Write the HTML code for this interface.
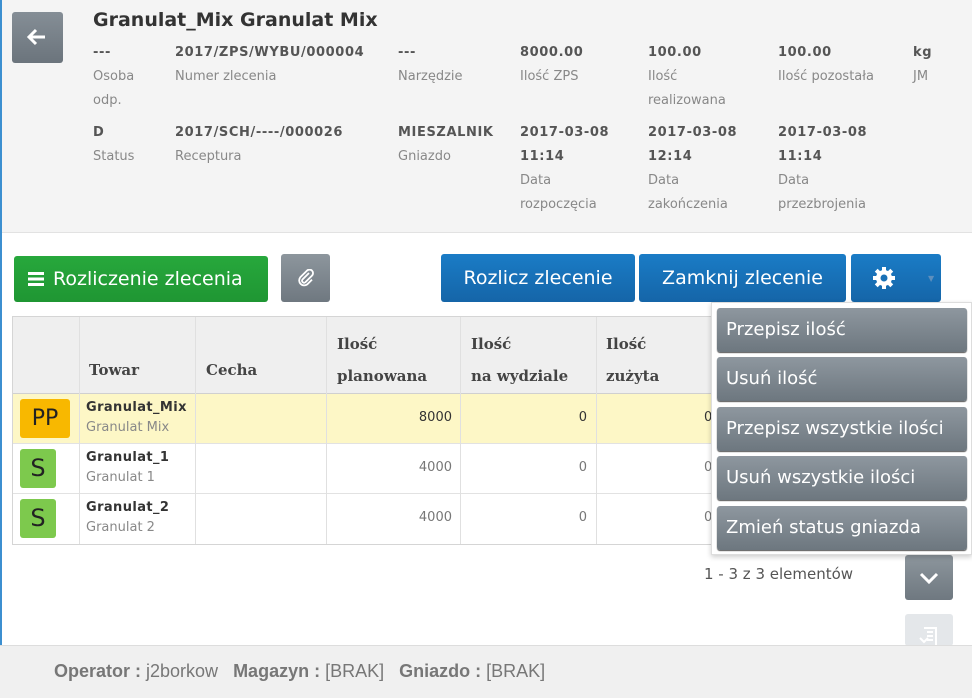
<!DOCTYPE html>
<html><head><meta charset="utf-8"><style>
*{margin:0;padding:0;box-sizing:border-box}
body{width:972px;height:698px;position:relative;overflow:hidden;background:#fff;font-family:"DejaVu Sans",Verdana,sans-serif;color:#555}
.a{position:absolute;white-space:nowrap}
.hdr{position:absolute;left:0;top:0;width:972px;height:233px;background:#f4f4f4;border-bottom:1px solid #e2e2e2}
.v{font-weight:bold;font-size:13px;letter-spacing:0.6px;color:#555}
.l{font-size:13px;color:#888}
.btn{position:absolute;color:#fff;font-size:18px;display:flex;align-items:center;justify-content:center;border-radius:3px}
.blue{background:linear-gradient(#1a7cc6,#1565a8)}
.gray{background:linear-gradient(#8d969d,#6f7880)}
.th{position:absolute;font-family:"DejaVu Serif",Georgia,serif;font-weight:bold;font-size:15px;color:#444}
.dd{position:absolute;left:717px;width:250px;height:44px;border-radius:3px;background:linear-gradient(#8e979f,#6d777f);color:#fff;font-size:18px;padding-left:9px;line-height:44px;box-shadow:0 1px 1px #555}
.nm{font-size:13px;font-weight:bold;color:#333;letter-spacing:0.4px}
</style></head><body>
<div class="hdr"></div>
<div class="a" style="left:0;top:0;width:2px;height:698px;background:#3c8fd0"></div>
<div class="a" style="left:12px;top:12px;width:51px;height:51px;border-radius:3px;background:linear-gradient(#858e96,#6b747c)"></div>
<svg class="a" style="left:25px;top:25px" width="24" height="24" viewBox="0 0 24 24"><path d="M20 12H5M11 5l-7 7 7 7" stroke="#fff" stroke-width="3" fill="none"/></svg>
<div class="a" style="left:93px;top:9px;font-size:19px;font-weight:bold;color:#333">Granulat_Mix Granulat Mix</div>

<div class="a v" style="left:93px;top:45px">---</div>
<div class="a l" style="left:93px;top:65px;line-height:24px">Osoba<br>odp.</div>
<div class="a v" style="left:175px;top:45px">2017/ZPS/WYBU/000004</div>
<div class="a l" style="left:175px;top:69px">Numer zlecenia</div>
<div class="a v" style="left:398px;top:45px">---</div>
<div class="a l" style="left:398px;top:69px">Narzędzie</div>
<div class="a v" style="left:520px;top:45px">8000.00</div>
<div class="a l" style="left:520px;top:69px">Ilość ZPS</div>
<div class="a v" style="left:648px;top:45px">100.00</div>
<div class="a l" style="left:648px;top:65px;line-height:24px">Ilość<br>realizowana</div>
<div class="a v" style="left:778px;top:45px">100.00</div>
<div class="a l" style="left:778px;top:69px">Ilość pozostała</div>
<div class="a v" style="left:913px;top:45px">kg</div>
<div class="a l" style="left:913px;top:69px">JM</div>

<div class="a v" style="left:93px;top:125px">D</div>
<div class="a l" style="left:93px;top:149px">Status</div>
<div class="a v" style="left:175px;top:125px">2017/SCH/----/000026</div>
<div class="a l" style="left:175px;top:149px">Receptura</div>
<div class="a v" style="left:398px;top:125px">MIESZALNIK</div>
<div class="a l" style="left:398px;top:149px">Gniazdo</div>
<div class="a" style="left:520px;top:121px;line-height:24px"><div class="v">2017-03-08<br>11:14</div><div class="l">Data<br>rozpoczęcia</div></div>
<div class="a" style="left:648px;top:121px;line-height:24px"><div class="v">2017-03-08<br>12:14</div><div class="l">Data<br>zakończenia</div></div>
<div class="a" style="left:778px;top:121px;line-height:24px"><div class="v">2017-03-08<br>11:14</div><div class="l">Data<br>przezbrojenia</div></div>

<div class="btn" style="left:14px;top:256px;width:254px;height:46px;background:linear-gradient(#27a83c,#1f9633);justify-content:flex-start;padding-left:14px;font-size:19px"><svg width="16" height="16" viewBox="0 0 16 16" style="margin-right:9px"><rect y="1" width="16" height="3" fill="#fff"/><rect y="6.5" width="16" height="3" fill="#fff"/><rect y="12" width="16" height="3" fill="#fff"/></svg>Rozliczenie zlecenia</div>
<div class="btn gray" style="left:281px;top:254px;width:49px;height:48px"><svg width="18" height="18" viewBox="0 0 18 18"><path d="M12 4L5.5 10.5a2 2 0 0 0 2.8 2.8L15 6.6a3.5 3.5 0 0 0-5-5L3.2 8.4a5 5 0 0 0 7 7L15 10.6" stroke="#fff" stroke-width="1.8" fill="none"/></svg></div>
<div class="btn blue" style="left:441px;top:254px;width:194px;height:48px;font-size:19px">Rozlicz zlecenie</div>
<div class="btn blue" style="left:639px;top:254px;width:207px;height:48px;font-size:19px">Zamknij zlecenie</div>
<div class="btn blue" style="left:851px;top:254px;width:90px;height:48px;justify-content:flex-start;padding-left:21px"><svg width="24" height="24" viewBox="0 0 24 24"><g fill="#fff"><circle cx="12" cy="12" r="8"/><rect x="10" y="1" width="4" height="22"/><rect x="1" y="10" width="22" height="4"/><rect x="10" y="1" width="4" height="22" transform="rotate(45 12 12)"/><rect x="10" y="1" width="4" height="22" transform="rotate(-45 12 12)"/></g><circle cx="12" cy="12" r="3.5" fill="#1870b6"/></svg><span style="margin-left:32px;font-size:8px;color:#5d8fbd">&#9660;</span></div>

<div class="a" style="left:12px;top:316px;width:700px;height:229px;border:1px solid #d5d5d5;overflow:hidden">
 <div class="a" style="left:0;top:0;width:700px;height:77px;background:#efefef;border-bottom:1px solid #d0d0d0"></div>
 <div class="a" style="left:0;top:77px;width:700px;height:50px;background:#fdf7c6;border-bottom:1px solid #e2e2e2"></div>
 <div class="a" style="left:0;top:127px;width:700px;height:50px;border-bottom:1px solid #e2e2e2"></div>
 <div class="a" style="left:66px;top:0;width:1px;height:229px;background:#e0e0e0"></div>
 <div class="a" style="left:182px;top:0;width:1px;height:229px;background:#e0e0e0"></div>
 <div class="a" style="left:313px;top:0;width:1px;height:229px;background:#e0e0e0"></div>
 <div class="a" style="left:447px;top:0;width:1px;height:229px;background:#e0e0e0"></div>
 <div class="a" style="left:583px;top:0;width:1px;height:229px;background:#e0e0e0"></div>
</div>
<div class="th a" style="left:89px;top:361px">Towar</div>
<div class="th a" style="left:206px;top:361px">Cecha</div>
<div class="th a" style="left:337px;top:328px;line-height:32px">Ilość<br>planowana</div>
<div class="th a" style="left:471px;top:328px;line-height:32px">Ilość<br>na wydziale</div>
<div class="th a" style="left:606px;top:328px;line-height:32px">Ilość<br>zużyta</div>

<div class="a" style="left:20px;top:399px;width:50px;height:39px;background:#f8b800;border-radius:3px;color:#222;font-size:22px;text-align:center;line-height:39px">PP</div>
<div class="a" style="left:20px;top:449px;width:36px;height:39px;background:#7dc94d;border-radius:3px;color:#222;font-size:24px;text-align:center;line-height:39px">S</div>
<div class="a" style="left:20px;top:499px;width:36px;height:39px;background:#7dc94d;border-radius:3px;color:#222;font-size:24px;text-align:center;line-height:39px">S</div>

<div class="a nm" style="left:86px;top:400px">Granulat_Mix</div>
<div class="a l" style="left:86px;top:420px">Granulat Mix</div>
<div class="a nm" style="left:86px;top:450px">Granulat_1</div>
<div class="a l" style="left:86px;top:470px">Granulat 1</div>
<div class="a nm" style="left:86px;top:500px">Granulat_2</div>
<div class="a l" style="left:86px;top:520px">Granulat 2</div>

<div class="a" style="left:400px;top:410px;width:52px;text-align:right;font-size:13px;color:#333">8000</div>
<div class="a" style="left:400px;top:460px;width:52px;text-align:right;font-size:13px;color:#777">4000</div>
<div class="a" style="left:400px;top:510px;width:52px;text-align:right;font-size:13px;color:#777">4000</div>
<div class="a" style="left:560px;top:410px;width:27px;text-align:right;font-size:13px;color:#333">0</div>
<div class="a" style="left:560px;top:460px;width:27px;text-align:right;font-size:13px;color:#777">0</div>
<div class="a" style="left:560px;top:510px;width:27px;text-align:right;font-size:13px;color:#777">0</div>
<div class="a" style="left:704px;top:410px;font-size:13px;color:#333">0</div>
<div class="a" style="left:704px;top:460px;font-size:13px;color:#777">0</div>
<div class="a" style="left:704px;top:510px;font-size:13px;color:#777">0</div>

<div class="a" style="left:704px;top:565px;font-size:15px;color:#555">1 - 3 z 3 elementów</div>
<div class="btn gray" style="left:905px;top:555px;width:48px;height:45px"><svg width="20" height="14" viewBox="0 0 20 14"><path d="M2 3l8 8 8-8" stroke="#fff" stroke-width="3" fill="none"/></svg></div>
<div class="a" style="left:905px;top:614px;width:48px;height:32px;background:#e4e7ea;border-radius:3px"></div>
<svg class="a" style="left:918px;top:626px" width="22" height="20" viewBox="0 0 22 20"><path d="M6 2h12v18M9 6h6M9 10h6M9 14h6M2 12l4 4 4-4" stroke="#fff" stroke-width="2" fill="none"/></svg>

<div class="a" style="left:711px;top:302px;width:261px;height:253px;background:#fff;border:1px solid #ddd;box-shadow:0 2px 5px rgba(0,0,0,.2)"></div>
<div class="dd" style="top:308px">Przepisz ilość</div>
<div class="dd" style="top:357px">Usuń ilość</div>
<div class="dd" style="top:407px">Przepisz wszystkie ilości</div>
<div class="dd" style="top:456px">Usuń wszystkie ilości</div>
<div class="dd" style="top:506px">Zmień status gniazda</div>

<div class="a" style="left:0;top:645px;width:972px;height:53px;background:#f0f0f0;border-top:1px solid #ddd"></div>
<div class="a" style="left:54px;top:661px;font-family:'Liberation Sans',Arial,sans-serif;font-size:18px;color:#777"><b>Operator :</b> j2borkow &nbsp;&nbsp;<b>Magazyn :</b> [BRAK] &nbsp;&nbsp;<b>Gniazdo :</b> [BRAK]</div>
</body></html>
